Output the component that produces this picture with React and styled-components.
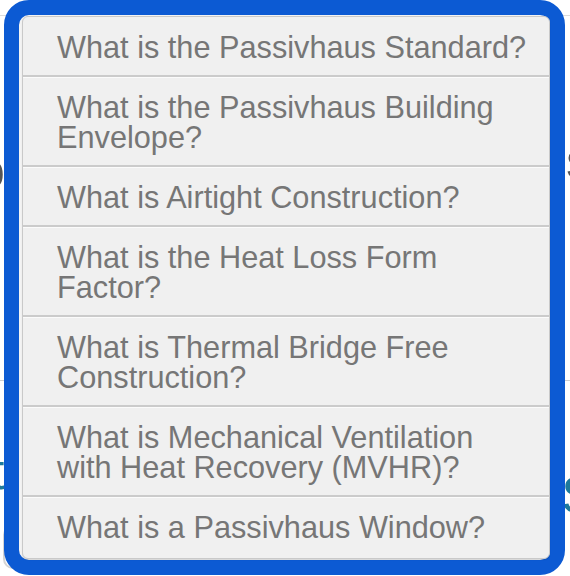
import React from "react";
import styled, { createGlobalStyle } from "styled-components";

const Global = createGlobalStyle`
  html, body { margin: 0; padding: 0; background: #ffffff; overflow: hidden; }
  body { font-family: "Liberation Sans", Arial, Helvetica, sans-serif; }
  #root { width: 570px; height: 576px; }
`;

const Page = styled.div`
  position: relative;
  width: 570px;
  height: 576px;
  overflow: hidden;
  background: #ffffff;
`;

/* --- page content behind the menu --- */
const Backdrop = styled.div`
  display: flex;
  flex-direction: column;
  padding-top: 15px;
`;

const Rule = styled.div`
  height: 1px;
  background: ${(p) => p.$color || "#dcdcdc"};
  margin-top: ${(p) => p.$top || 0}px;
`;

const PeekRow = styled.div`
  display: flex;
  justify-content: space-between;
  align-items: center;
  height: ${(p) => p.$height}px;
  margin-top: ${(p) => p.$top}px;
  font-size: ${(p) => p.$size || 46}px;
  line-height: 1;
  color: ${(p) => p.$color};
`;

const PeekGlyph = styled.span`
  margin-left: ${(p) => p.$ml || 0}px;
  margin-right: ${(p) => p.$mr || 0}px;
  transform: translateY(${(p) => p.$dy || 0}px);
`;

const GhostButton = styled.div`
  width: 120px;
  height: 40px;
  margin-top: 22px;
  margin-left: 3px;
  border: 2px solid #d4d4d4;
  border-radius: 10px;
`;

/* --- the menu overlay --- */
const Overlay = styled.div`
  position: absolute;
  left: 4px;
  top: 0;
  width: 561px;
  height: 575px;
  box-sizing: border-box;
  border: 15px solid #0c5ad3;
  border-radius: 25px;
  background: #f3f3f3;
  display: flex;
  padding: 1px 0 1px 3px;
`;

const Panel = styled.ul`
  list-style: none;
  margin: 0;
  padding: 0;
  flex: 1;
  background: #f0f0f0;
  border: 1px solid #c9c9c9;
  border-radius: 6px;
  box-shadow: 0 1px 1px rgba(0, 0, 0, 0.12);
  overflow: hidden;
  display: flex;
  flex-direction: column;
`;

const Item = styled.li`
  padding: ${(p) => (p.$first ? "16px" : "15px")} 16px 12px 34px;
  font-size: 30.7px;
  line-height: 30px;
  color: #767676;
  border-top: ${(p) => (p.$first ? "none" : "1px solid #fbfbfb")};
  border-bottom: ${(p) => (p.$last ? "none" : "2px solid #cbcbcb")};
  flex: ${(p) => (p.$last ? 1 : "none")};
`;

const questions = [
  "What is the Passivhaus Standard?",
  "What is the Passivhaus Building Envelope?",
  "What is Airtight Construction?",
  "What is the Heat Loss Form Factor?",
  "What is Thermal Bridge Free Construction?",
  "What is Mechanical Ventilation with Heat Recovery (MVHR)?",
  "What is a Passivhaus Window?",
];

export default function App() {
  return (
    <Page>
      <Global />
      <Backdrop>
        <Rule />
        <PeekRow $top={118} $height={56} $color="#555555" $size={52}>
          <PeekGlyph $ml={-24} $dy={8}>o</PeekGlyph>
          <PeekGlyph $mr={-22} $dy={-2}>s</PeekGlyph>
        </PeekRow>
        <Rule $top={190} $color="#cfcfcf" />
        <PeekRow $top={62} $height={60} $color="#1d7a9c" $size={52}>
          <PeekGlyph $ml={-10} $dy={-2}>t</PeekGlyph>
          <PeekGlyph $mr={-26} $dy={22}>S</PeekGlyph>
        </PeekRow>
        <GhostButton />
      </Backdrop>
      <Overlay>
        <Panel>
          {questions.map((q, i) => (
            <Item key={q} $first={i === 0} $last={i === questions.length - 1}>
              {q}
            </Item>
          ))}
        </Panel>
      </Overlay>
    </Page>
  );
}
